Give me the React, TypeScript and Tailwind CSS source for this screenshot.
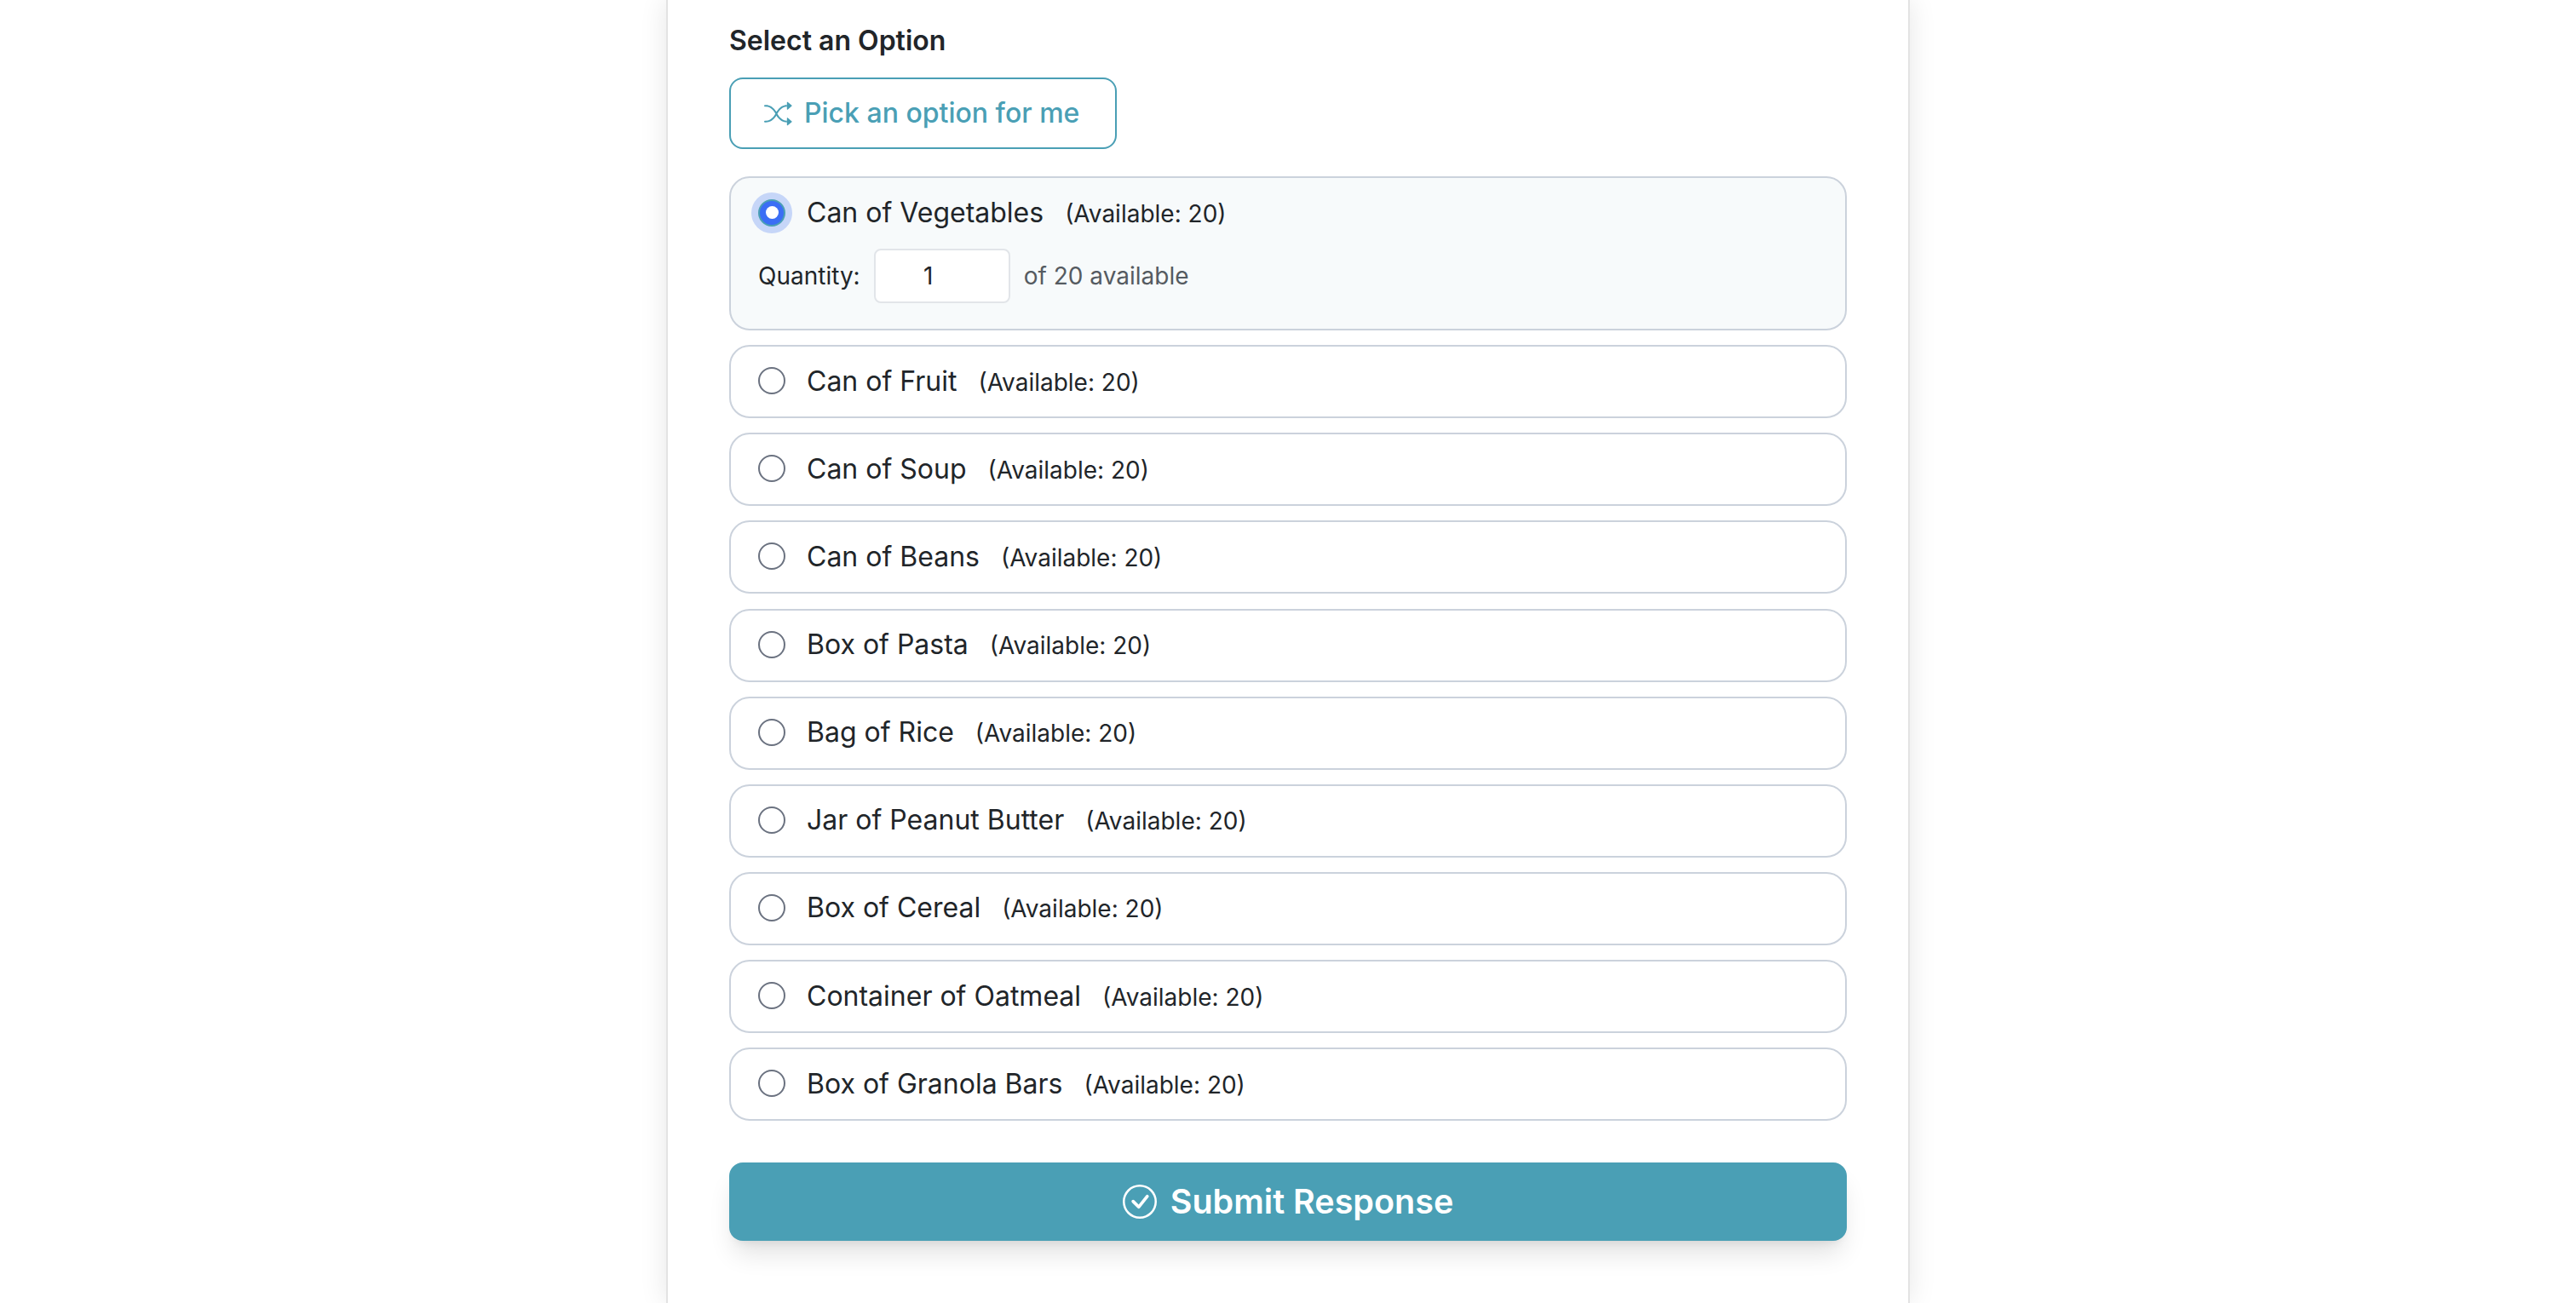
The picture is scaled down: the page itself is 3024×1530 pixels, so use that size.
import { BsCheckCircle, BsShuffle } from "react-icons/bs";

const options = [
  "Can of Fruit",
  "Can of Soup",
  "Can of Beans",
  "Box of Pasta",
  "Bag of Rice",
  "Jar of Peanut Butter",
  "Box of Cereal",
  "Container of Oatmeal",
  "Box of Granola Bars",
];

function OptionLabel({ name }: { name: string }) {
  return (
    <span className="flex items-baseline">
      <span className="text-[32px] leading-[48px] text-[#212529]">{name}</span>
      <span className="ml-[25px] text-[28px] leading-[48px] text-[#212529]">
        (Available: 20)
      </span>
    </span>
  );
}

export default function App() {
  return (
    <div className="h-[1530px] overflow-hidden bg-white font-['Inter',sans-serif]">
      <div className="mx-auto h-full w-[1460px] border-x-2 border-[#e3e3e3] bg-white px-[72px] pt-[24px] shadow-[0_0_30px_rgba(0,0,0,0.1)]">
        <h2 className="text-[32px] leading-[48px] font-semibold text-[#212529]">
          Select an Option
        </h2>
        <button className="mt-[19px] flex h-[84px] w-[455px] items-center gap-[14px] rounded-[16px] border-2 border-[#4a9fb5] bg-white pl-[39px] text-[32px] font-medium text-[#4a9fb5]">
          <BsShuffle className="h-[33px] w-[33px]" />
          Pick an option for me
        </button>

        <div className="mt-[32px] flex flex-col gap-[17.125px]">
          <div className="h-[181px] rounded-[24px] border-2 border-[#cbd2dc] bg-[#f7fafb] pl-[32px] pt-[17px]">
            <div className="flex items-center gap-[25px]">
              <span className="flex h-[32px] w-[32px] -translate-y-px items-center justify-center rounded-full border-2 border-[#4a9fb5] bg-[#3b6ef5] ring-8 ring-[#c6d6f8]">
                <span className="h-[15px] w-[15px] rounded-full bg-white" />
              </span>
              <OptionLabel name="Can of Vegetables" />
            </div>
            <div className="mt-[17px] flex items-center text-[28px]">
              <label className="text-[#212529]">Quantity:</label>
              <input
                readOnly
                value="1"
                className="ml-[16px] h-[64px] w-[160px] rounded-[8px] border-2 border-[#e2e5e9] bg-white pr-[32px] text-center text-[28px] text-[#212529]"
              />
              <span className="ml-[16px] text-[#555b61]">of 20 available</span>
            </div>
          </div>

          {options.map((name) => (
            <div
              key={name}
              className="flex h-[86px] items-center gap-[25px] rounded-[24px] border-2 border-[#cbd2dc] bg-white pl-[32px]"
            >
              <span className="h-[32px] w-[32px] -translate-y-px rounded-full border-2 border-[#6b7280] bg-white" />
              <OptionLabel name={name} />
            </div>
          ))}
        </div>

        <button className="mt-[49px] flex h-[92px] w-full items-center justify-center gap-[16px] rounded-[16px] bg-[#4a9fb5] text-[39.5px] font-semibold text-white shadow-[0_20px_30px_-6px_rgba(0,0,0,0.12),0_8px_12px_-8px_rgba(0,0,0,0.1)]">
          <BsCheckCircle className="h-[40px] w-[40px]" />
          Submit Response
        </button>
      </div>
    </div>
  );
}
